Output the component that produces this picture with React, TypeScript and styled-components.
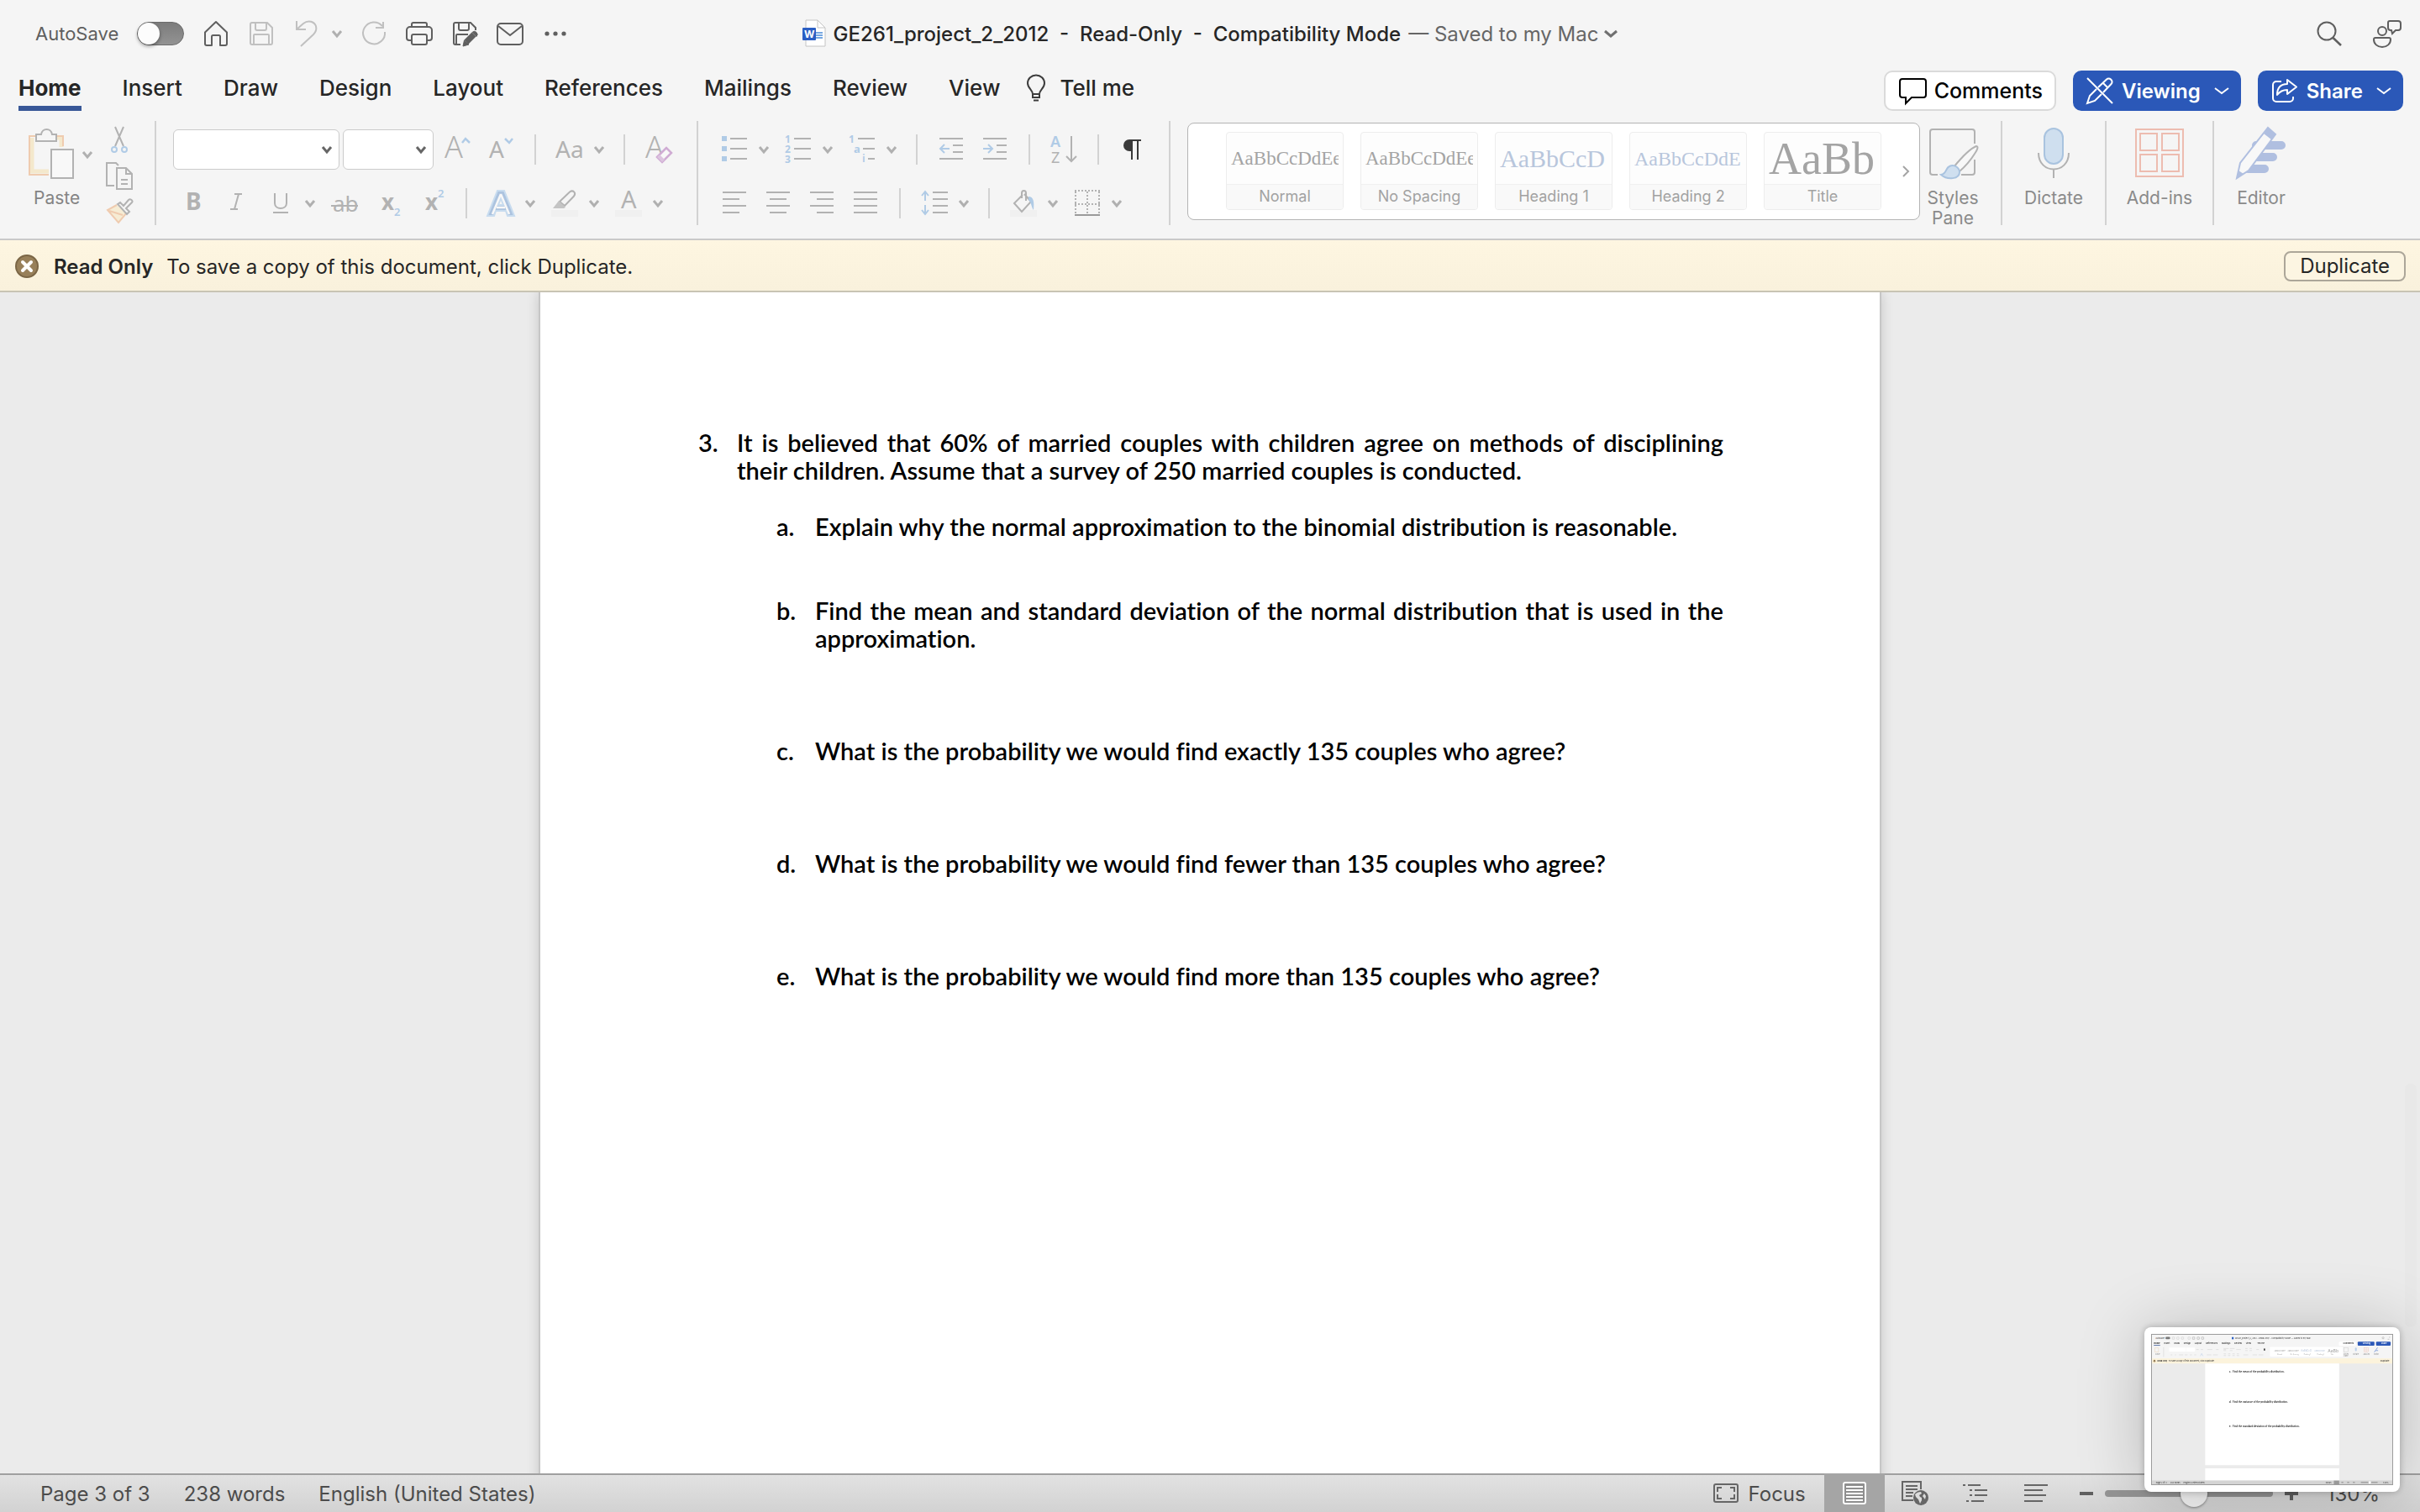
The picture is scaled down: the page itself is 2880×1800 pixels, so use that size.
import React from "react";
import styled, { createGlobalStyle, css } from "styled-components";

const ui = `Inter, "Liberation Sans", sans-serif`;
const serif = `"Liberation Serif", serif`;
const G = "#b2b2b2";
const B = "#b0cbe6";
const D = "#5f5f5f";

const Global = createGlobalStyle`
  * { box-sizing: border-box; }
  body { margin: 0; background: #ebebeb; font-family: ${ui}; color: #262626; }
  button, select, input { font: inherit; color: inherit; margin: 0; }
  button { border: 0; background: none; padding: 0; }
  svg { display: block; flex: none; overflow: visible; }
`;

const Window = styled.div`
  position: relative;
  display: flex;
  flex-direction: column;
  height: 100vh;
  overflow: hidden;
`;

const Chrome = styled.header`
  background: #f5f5f5;
  border-bottom: 2px solid #c9c9c9;
`;

const TitleBar = styled.div`
  display: grid;
  grid-template-columns: 1fr auto 1fr;
  align-items: center;
  height: 82px;
  padding: 0 22px 2px;
`;

const Quick = styled.div`
  display: flex;
  align-items: center;
  gap: 22px;
  padding-left: 20px;
`;

const AutoSave = styled.label`
  display: flex;
  align-items: center;
  gap: 22px;
  font-size: 22px;
  color: ${D};
`;

const Toggle = styled.input`
  appearance: none;
  display: flex;
  width: 56px;
  height: 28px;
  border: 1px solid #6c6c6c;
  border-radius: 14px;
  background: linear-gradient(#7c7c7c, #939393);
  &::before {
    content: "";
    width: 26px;
    height: 26px;
    border-radius: 50%;
    background: #fcfcfc;
    box-shadow: 0 2px 4px rgba(0, 0, 0, 0.4);
  }
`;

const Split = styled.div<{ $gap?: number }>`
  display: flex;
  align-items: center;
  gap: ${(p) => p.$gap ?? 12}px;
`;

const DocTitle = styled.h1`
  display: flex;
  align-items: center;
  gap: 9px;
  margin: 0;
  font-size: 24px;
  font-weight: 500;
  white-space: pre;
  color: #262626;
`;

const Saved = styled.button`
  display: flex;
  align-items: center;
  gap: 7px;
  font-weight: 400;
  color: #666;
`;

const Corner = styled.div`
  display: flex;
  justify-content: flex-end;
  align-items: center;
  gap: 36px;
`;

const TabBar = styled.div`
  display: flex;
  justify-content: space-between;
  height: 52px;
  padding: 0 20px 0 22px;
`;

const Tabs = styled.nav`
  display: flex;
  align-items: flex-start;
  gap: 49px;
`;

const Tab = styled.button<{ $on?: boolean }>`
  display: flex;
  align-items: center;
  gap: 16px;
  height: 50px;
  padding-top: 2px;
  font-size: 26px;
  line-height: 30px;
  font-weight: ${(p) => (p.$on ? 700 : 500)};
  border-bottom: 6px solid transparent;
  ${(p) =>
    p.$on &&
    css`
      border-image: linear-gradient(#385797, #385797) 1;
    `}
`;

const TellMe = styled(Tab)`
  margin-left: -18px;
`;

const Actions = styled.div`
  display: flex;
  gap: 20px;
  padding-top: 2px;
`;

const Action = styled.button<{ $primary?: boolean }>`
  display: flex;
  align-items: center;
  gap: 10px;
  height: 48px;
  padding: ${(p) => (p.$primary ? "0 12px 0 14px" : "0 14px 0 16px")};
  border-radius: 10px;
  border: 2px solid ${(p) => (p.$primary ? "#2b58b8" : "#dadada")};
  background: ${(p) => (p.$primary ? "#2b58b8" : "#fff")};
  color: ${(p) => (p.$primary ? "#fff" : "#000")};
  font-size: ${(p) => (p.$primary ? 24 : 25)}px;
  font-weight: ${(p) => (p.$primary ? 600 : 500)};
  svg:last-child:not(:first-child) {
    margin-left: 6px;
  }
`;

const Ribbon = styled.div`
  display: flex;
  height: 150px;
  padding: 10px 0 16px;
`;

const Divider = styled.div`
  width: 2px;
  flex: none;
  background: #d2d2d2;
`;

const Clipboard = styled.div`
  display: flex;
  width: 184px;
  padding: 6px 26px 0 34px;
  gap: 16px;
`;

const Paste = styled.div`
  display: flex;
  flex-direction: column;
  gap: 8px;
  width: 76px;
  padding-top: 3px;
`;

const PasteLabel = styled.span`
  font-size: 21px;
  line-height: 26px;
  color: #848484;
  padding-left: 6px;
`;

const Stack = styled.div`
  display: flex;
  flex-direction: column;
  gap: 11px;
`;

const Group = styled.div<{ $left: number; $right: number }>`
  display: flex;
  flex-direction: column;
  gap: 22px;
  padding: 10px ${(p) => p.$right}px 0 ${(p) => p.$left}px;
`;

const Row = styled.div<{ $h: number; $indent?: number }>`
  display: flex;
  align-items: center;
  gap: 18px;
  height: ${(p) => p.$h}px;
  padding-left: ${(p) => p.$indent ?? 0}px;
`;

const Tool = styled.button`
  display: flex;
  justify-content: center;
  width: 34px;
`;

const Bar = styled.div`
  width: 2px;
  height: 36px;
  margin: 0 5px;
  background: #d2d2d2;
`;

const Combos = styled.div`
  display: flex;
  gap: 4px;
  margin-right: -7px;
`;

const Combo = styled.label<{ $w: number }>`
  display: grid;
  grid-template-columns: 1fr 20px;
  align-items: center;
  width: ${(p) => p.$w}px;
  height: 48px;
  border: 1px solid #cbcbcb;
  border-radius: 6px;
  background: #fff;
  select {
    appearance: none;
    grid-area: 1 / 1 / 2 / 3;
    height: 46px;
    border: 0;
    background: none;
  }
  svg {
    grid-area: 1 / 2;
  }
`;

const Gallery = styled.div`
  display: flex;
  align-items: center;
  height: 116px;
  margin: 2px 0 0 20px;
  padding-left: 45px;
  border: 1px solid #b4b4b4;
  border-radius: 8px;
  background: #fff;
`;

const Cards = styled.div`
  display: flex;
  gap: 20px;
  padding-bottom: 1px;
`;

const Card = styled.button`
  display: flex;
  flex-direction: column;
  width: 140px;
  height: 93px;
  border: 1px solid #ededed;
  border-radius: 4px;
  overflow: hidden;
  background: #fdfdfd;
`;

const Sample = styled.span<{ $size: number; $color: string }>`
  width: 128px;
  height: 62px;
  margin: 0 5px;
  overflow: hidden;
  text-align: left;
  font-family: ${serif};
  font-size: ${(p) => p.$size}px;
  line-height: 62px;
  color: ${(p) => p.$color};
`;

const CardName = styled.span`
  width: 100%;
  height: 30px;
  border-top: 1px solid #f1f1f1;
  background: #f9f9f9;
  font-size: 18px;
  line-height: 28px;
  color: #a2a2a2;
`;

const More = styled.button`
  display: flex;
  justify-content: flex-end;
  width: 45px;
  padding-right: 12px;
`;

const Big = styled.button<{ $w: number }>`
  display: flex;
  flex-direction: column;
  align-items: center;
  gap: 10px;
  width: ${(p) => p.$w}px;
  padding-top: 6px;
  font-size: 21px;
  line-height: 24px;
  color: #8a8a8a;
`;

const Spacer = styled.div`
  width: 18px;
`;

const Notice = styled.div`
  display: flex;
  align-items: center;
  height: 62px;
  flex: none;
  padding: 2px 17px 0 18px;
  border-bottom: 2px solid #c8c4b4;
  background: linear-gradient(#fef6e1, #f9f1dc);
  font-size: 24px;
  p {
    margin: 0 auto 0 18px;
  }
  strong {
    font-weight: 600;
    margin-right: 16px;
  }
`;

const Duplicate = styled.button`
  height: 36px;
  padding: 0 17px;
  border: 2px solid #aca699;
  border-radius: 8px;
  background: #fcf5e2;
  font-size: 24px;
  line-height: 30px;
`;

const Canvas = styled.main`
  flex: 1;
  min-height: 0;
  overflow: hidden;
  display: flex;
  justify-content: center;
  background: #ebebeb;
`;

const Page = styled.article`
  width: 1598px;
  height: 1700px;
  padding: 162px 186px 0 188px;
  background: #fff;
  border: solid #c6c6c6;
  border-width: 0 2px;
  box-shadow: 0 0 14px rgba(0, 0, 0, 0.16);
  font-family: Lato, "Open Sans", sans-serif;
  font-size: 29px;
  font-weight: 600;
  font-variant-ligatures: none;
  line-height: 33px;
  text-align: justify;
  color: #000;
`;

const Problem = styled.div`
  display: grid;
  grid-template-columns: 46px 1fr;
`;

const Body = styled.p`
  margin: 0;
`;

const Parts = styled.div`
  margin-left: 93px;
`;

const Part = styled(Problem)<{ $top: number }>`
  margin-top: ${(p) => p.$top}px;
`;

const ScrollThumb = styled.div`
  position: absolute;
  right: 4px;
  bottom: 220px;
  width: 14px;
  height: 290px;
  border-radius: 7px;
  background: #e8e8e8;
`;

const Status = styled.footer`
  display: flex;
  flex: none;
  align-items: center;
  height: 46px;
  padding: 0 48px;
  border-top: 2px solid #a0a0a0;
  background: linear-gradient(#e2e2e2, #d2d2d2);
  font-size: 24px;
  color: #4c4c4c;
`;

const Facts = styled.div`
  display: flex;
  gap: 40px;
  margin-right: auto;
`;

const FocusBtn = styled.button`
  display: flex;
  align-items: center;
  gap: 12px;
  margin-right: 22px;
`;

const View = styled.button<{ $on?: boolean }>`
  display: flex;
  justify-content: center;
  align-items: center;
  width: 72px;
  height: ${(p) => (p.$on ? 48 : 44)}px;
  background: ${(p) => (p.$on ? "#a5a5a5" : "none")};
`;

const Zoom = styled.div`
  display: flex;
  align-items: center;
  gap: 14px;
  margin-left: 16px;
`;

const Slider = styled.input`
  appearance: none;
  width: 200px;
  height: 8px;
  border-radius: 4px;
  background: #949494;
  &::-webkit-slider-thumb {
    appearance: none;
    width: 32px;
    height: 32px;
    border-radius: 50%;
    background: #f3f3f3;
    box-shadow: 0 1px 3px rgba(0, 0, 0, 0.4);
  }
`;

const Percent = styled.span`
  margin-left: 20px;
`;

const Preview = styled.div`
  position: fixed;
  right: 24px;
  bottom: 24px;
  padding: 8px;
  border-radius: 8px;
  background: #fff;
  box-shadow: 0 4px 80px rgba(0, 0, 0, 0.22), 0 0 8px rgba(0, 0, 0, 0.25);
  svg {
    border: 1px solid #9c9c9c;
    overflow: hidden;
  }
`;

type IconProps = {
  w?: number;
  h?: number;
  c?: string;
  s?: number;
  children: React.ReactNode;
};
const Icon = ({ w = 32, h = 32, c = G, s = 2, children }: IconProps) => (
  <svg width={w} height={h} viewBox={`0 0 ${w} ${h}`} fill="none" stroke={c} strokeWidth={s} aria-hidden="true">
    {children}
  </svg>
);

const Chevron = ({ c = "#b0b0b0", s = 3, w = 12 }: { c?: string; s?: number; w?: number }) => (
  <Icon w={w} h={10} c={c} s={s}>
    <path d={`M1 2 L${w / 2} 8 L${w - 1} 2`} />
  </Icon>
);

const T = ({ x, y, size, c, w = 400, f = "Noto Sans", children }: any) => (
  <text x={x} y={y} fontSize={size} fill={c} stroke="none" fontWeight={w} fontFamily={`"${f}", sans-serif`}>
    {children}
  </text>
);

const lines = (rows: [number, number, number][]) => rows.map(([x1, x2, y]) => `M${x1} ${y}H${x2}`).join("");

const icons = {
  home: (
    <Icon c={D}>
      <path d="M3 28V14.500L16 2l13 12.500V28a2 2 0 0 1-2 2h-6V19.500a1.500 1.500 0 0 0-1.500-1.500h-7a1.500 1.500 0 0 0-1.500 1.500V30H5a2 2 0 0 1-2-2z" strokeLinejoin="round" />
    </Icon>
  ),
  save: (
    <Icon c="#c0c0c0">
      <path d="M5 3h18l6 6v18a2 2 0 0 1-2 2H5a2 2 0 0 1-2-2V5a2 2 0 0 1 2-2zM9 3v7a2 2 0 0 0 2 2h9a2 2 0 0 0 2-2V3M7 29V18a1 1 0 0 1 1-1h16a1 1 0 0 1 1 1v11" />
    </Icon>
  ),
  undo: (
    <Icon c="#c0c0c0">
      <path d="M4 1v10h11M4 11L12 4c6-5 13-2 15 3 1 4 0 7-3 10L9 31" />
    </Icon>
  ),
  redo: (
    <Icon c="#c0c0c0">
      <path d="M26 7A13 13 0 1 0 29 14M27 2v7h-9" />
    </Icon>
  ),
  print: (
    <Icon c={D}>
      <path d="M7 24H4a3 3 0 0 1-3-3v-9a4 4 0 0 1 4-4h22a4 4 0 0 1 4 4v9a3 3 0 0 1-3 3h-3M7 8V5a2 2 0 0 1 2-2h14a2 2 0 0 1 2 2v3M9 17h14a2 2 0 0 1 2 2v8a2 2 0 0 1-2 2H9a2 2 0 0 1-2-2v-8a2 2 0 0 1 2-2z" />
    </Icon>
  ),
  savePen: (
    <Icon c={D}>
      <path d="M11 29H5a2 2 0 0 1-2-2V5a2 2 0 0 1 2-2h18l6 6v3M9 3v7a2 2 0 0 0 2 2h8a2 2 0 0 0 2-2V3M6 29V18a1 1 0 0 1 1-1h13" />
      <path d="M18 26L27 17" strokeWidth="7" />
      <path d="M14 31l1.500-7 5.500 5zM25 14.500a3.500 3.500 0 0 1 5 5z" fill={D} stroke={D} strokeWidth="1" />
    </Icon>
  ),
  mail: (
    <Icon c={D}>
      <rect x="1" y="4" width="30" height="25" rx="4" />
      <path d="M2 7l14 11L30 7" />
    </Icon>
  ),
  dots: (
    <Icon c={D}>
      <g fill={D} stroke="none">
        <circle cx="6" cy="16" r="2.600" />
        <circle cx="16" cy="16" r="2.600" />
        <circle cx="26" cy="16" r="2.600" />
      </g>
    </Icon>
  ),
  wordDoc: (
    <Icon w={28} h={34} c="#c4c4c4" s={1}>
      <path d="M4 1h14l9 9v22H4z" fill="#fff" />
      <path d="M18 1v9h9" />
      <path d="M16 16h8M16 19h8M16 22h8" stroke="#4a8ad8" strokeWidth="1.500" />
      <rect x="0" y="10" width="16" height="15" rx="1" fill="#2b5fc4" stroke="none" />
      <T x="2" y="22" size="12" c="#fff" w="700" f="Inter">W</T>
    </Icon>
  ),
  search: (
    <Icon c={D} s={2}>
      <circle cx="13" cy="13" r="10.500" />
      <path d="M20.500 21L30 30" strokeWidth="2.500" />
    </Icon>
  ),
  people: (
    <Icon w={34} h={34} c={D}>
      <circle cx="11" cy="14" r="5" />
      <path d="M3 22h16a2 2 0 0 1 2 2c0 5-4 9-10 9S1 29 1 24a2 2 0 0 1 2-2zM20 2h10a3 3 0 0 1 3 3v5a3 3 0 0 1-3 3h-3l-4 4-1-4h-1a3 3 0 0 1-3-3V4a2 2 0 0 1 2-2z" />
    </Icon>
  ),
  bulb: (
    <Icon w={24} h={32} c="#3c3c3c">
      <path d="M8 23c0-5-6-7-6-13a10 9.500 0 0 1 20 0c0 6-6 8-6 13zM8 23v4h8v-4M9 30.500h6" />
    </Icon>
  ),
  comment: (
    <Icon c="#000">
      <path d="M4 2h25a3 3 0 0 1 3 3v16a3 3 0 0 1-3 3H15l-7 7v-7H4a3 3 0 0 1-3-3V5a3 3 0 0 1 3-3z" />
    </Icon>
  ),
  penOff: (
    <Icon c="#fff">
      <path d="M1 1l30 30M14 12L24 2.500a3.500 3.500 0 0 1 5 0l.500.500a3.500 3.500 0 0 1 0 5L20 18M20 7l6 6M12 14L4 22 1 31l9-3 8-8" />
    </Icon>
  ),
  share: (
    <Icon c="#fff">
      <path d="M12 5H6a4 4 0 0 0-4 4v16a4 4 0 0 0 4 4h16a4 4 0 0 0 4-4v-2" />
      <path d="M19 3l11 8.500L19 20v-5C13 15 10 17 7 21c0-8 4-13 12-13z" strokeLinejoin="round" />
    </Icon>
  ),
  paste: (
    <Icon w={56} h={62}>
      <path d="M4 11v40h20M34 11h5v11" stroke="#f4e8cc" strokeWidth="5" />
      <path d="M9 9H1v46h23M34 9h7v12" stroke="#efcbaf" />
      <path d="M9 7h6c1-8 12-8 13 0h5v8H9z" fill="#f5f5f5" />
      <rect x="27" y="25" width="26" height="34" fill="#f8f8f8" />
    </Icon>
  ),
  cut: (
    <Icon>
      <path d="M11 1l10 23M21 1L11 24" />
      <g stroke={B}>
        <circle cx="10" cy="28" r="3" />
        <circle cx="22" cy="28" r="3" />
      </g>
    </Icon>
  ),
  copy: (
    <Icon>
      <path d="M10 28H1V1h11l3 3M13 7h11l7 7v18H13zM24 7v7h7M18 21h8M18 26h8" />
    </Icon>
  ),
  brush: (
    <Icon>
      <path d="M13 8L2 14l13 15 10-12M4 15l16 5" stroke="#efcbaf" fill="#f6ecd4" />
      <path d="M14 7l3-2 4 4 6-7c2-2 6 1 4 3l-7 7 4 4-3 3z" fill="#f5f5f5" />
    </Icon>
  ),
  grow: (
    <Icon>
      <T x="1" y="26" size="36" c={G} w="300">A</T>
      <path d="M22 8l4-5 5 5" stroke={B} strokeWidth="2.500" />
    </Icon>
  ),
  shrink: (
    <Icon>
      <T x="2" y="26" size="28" c={G}>A</T>
      <path d="M21 3l5 5 4-5" stroke={B} strokeWidth="2.500" />
    </Icon>
  ),
  changeCase: (
    <Icon>
      <T x="-1" y="26" size="28" c={G}>Aa</T>
    </Icon>
  ),
  clear: (
    <Icon>
      <T x="0" y="26" size="36" c={G} w="300">A</T>
      <path d="M14 25L25 14l6 6-11 11z" fill="#f8f8f8" stroke="#d0acd4" strokeWidth="2.500" />
      <path d="M14 25l3-3 6 6-3 3z" fill="#dcc4df" stroke="none" />
    </Icon>
  ),
  bold: <Icon><T x="7" y="24" size="28" c={G} w="700">B</T></Icon>,
  italic: (
    <Icon><path d="M13 5h9M8 23h9M18 5l-5 18" /></Icon>
  ),
  underline: (
    <Icon>
      <path d="M9 4v12c0 8 14 8 14 0V4M7 27h18" />
    </Icon>
  ),
  strike: (
    <Icon>
      <T x="2" y="26" size="26" c={G}>ab</T>
      <path d="M0 19h32" />
    </Icon>
  ),
  sub: (
    <Icon>
      <T x="8" y="24" size="26" c={G} w="700">x</T>
      <T x="23" y="31" size="13" c={B} w="600">2</T>
    </Icon>
  ),
  sup: (
    <Icon>
      <T x="8" y="24" size="26" c={G} w="700">x</T>
      <T x="23" y="9" size="13" c={B} w="600">2</T>
    </Icon>
  ),
  effects: (
    <Icon>
      <path d="M12 1h8l12 30h-8l-2-6H10l-2 6H0zM13 18h6l-3-8z" fill="#acc3df" stroke="#c8dcef" />
      <path d="M16 5L6 29M16 5l10 24M11 21h10" stroke="#f8f8f8" strokeWidth="2.500" />
    </Icon>
  ),
  marker: (
    <Icon>
      <path d="M10 14L22 2.500c4-3 8 1 5 5L16 19z" />
      <path d="M9 13l8 8-2 1H2z" fill="#c4c4c4" stroke="none" />
      <path d="M0 28h32" stroke="#f0f0f0" strokeWidth="8" />
    </Icon>
  ),
  fontColor: (
    <Icon>
      <path d="M0 28h32" stroke="#f0f0f0" strokeWidth="8" />
      <T x="7" y="22" size="29" c={G}>A</T>
    </Icon>
  ),
  bullets: (
    <Icon>
      <path d={lines([[11, 31, 3], [11, 31, 15], [11, 31, 27]])} />
      <path d="M1 0h6v6H1zM1 12h6v6H1zM1 24h6v6H1z" fill={B} stroke="none" />
    </Icon>
  ),
  numbers: (
    <Icon>
      <path d={lines([[11, 31, 3], [11, 31, 15], [11, 31, 27]])} />
      <T x="0" y="8" size="12" c={B} w="700">1</T>
      <T x="0" y="20" size="12" c={B} w="700">2</T>
      <T x="0" y="32" size="12" c={B} w="700">3</T>
    </Icon>
  ),
  multi: (
    <Icon>
      <path d={lines([[11, 31, 3], [17, 31, 15], [23, 31, 27]])} />
      <T x="0" y="8" size="12" c={B} w="700">1</T>
      <T x="6" y="20" size="13" c={B} w="700">a</T>
      <T x="16" y="31" size="13" c={B} w="600">i</T>
    </Icon>
  ),
  outdent: (
    <Icon>
      <path d={lines([[2, 30, 3], [18, 30, 11], [18, 30, 19], [2, 30, 27]])} />
      <path d="M14 15H3M8 10l-5 5 5 5" stroke={B} />
    </Icon>
  ),
  indent: (
    <Icon>
      <path d={lines([[2, 30, 3], [18, 30, 11], [18, 30, 19], [2, 30, 27]])} />
      <path d="M2 15h11M8 10l5 5-5 5" stroke={B} />
    </Icon>
  ),
  sort: (
    <Icon>
      <T x="0" y="13" size="18" c={B} w="600">A</T>
      <T x="1" y="32" size="18" c={G}>Z</T>
      <path d="M25 0v30M19 24l6 6 6-6" />
    </Icon>
  ),
  pilcrow: (
    <Icon c="#3a3a3a">
      <path d="M26 5H13v0" />
      <path d="M15 4h-3a7 7 0 0 0 0 14h3z" fill="#3a3a3a" stroke="none" />
      <path d="M15 4v24M22 4v24" />
    </Icon>
  ),
  left: <Icon><path d={lines([[2, 30, 3], [2, 22, 11], [2, 30, 19], [2, 22, 27]])} /></Icon>,
  center: <Icon><path d={lines([[2, 30, 3], [6, 26, 11], [2, 30, 19], [6, 26, 27]])} /></Icon>,
  right: <Icon><path d={lines([[2, 30, 3], [10, 30, 11], [2, 30, 19], [10, 30, 27]])} /></Icon>,
  justify: <Icon><path d={lines([[2, 30, 3], [2, 30, 11], [2, 30, 19], [2, 30, 27]])} /></Icon>,
  spacing: (
    <Icon>
      <path d={lines([[14, 32, 3], [14, 32, 11], [14, 32, 19], [14, 32, 27]])} />
      <path d="M5 13V3M1 7l4-5 4 5M5 18v10M1 24l4 5 4-5" stroke={B} />
    </Icon>
  ),
  bucket: (
    <Icon>
      <path d="M0 28h32" stroke="#f0f0f0" strokeWidth="8" />
      <path d="M15 6L5 16l9 10 11-12-8-9M14 10V4c0-4 5-4 5 0v9" />
      <path d="M22 8c6 0 7 6 6 16-3-4-2-8-6-12z" fill={B} stroke="none" />
    </Icon>
  ),
  borders: (
    <Icon>
      <path d="M1 1h30M1 17h30" strokeDasharray="2 2" />
      <path d="M2 2v26M16 2v26M30 2v26" strokeDasharray="2 2" />
      <path d="M1 30h30" stroke="#9a9a9a" />
    </Icon>
  ),
  styles: (
    <Icon w={60} h={64}>
      <path d="M12 58H6a3 3 0 0 1-3-3V7a3 3 0 0 1 3-3h47a3 3 0 0 1 3 3v14M56 40v15a3 3 0 0 1-3 3H40" />
      <path d="M31 49C40 38 50 27 58 24c3 0 1 5-2 9-5 8-11 15-18 21" fill="#f8f8f8" />
      <path d="M16 58c7-1 5-8 10-10 6-3 12 2 12 7 0 8-14 10-22 3z" fill="#cfdfef" stroke="#a9c3df" />
    </Icon>
  ),
  mic: (
    <Icon w={60} h={64}>
      <rect x="19" y="3" width="22" height="42" rx="11" fill="#cfdfef" stroke="#a9c3df" />
      <path d="M12 32c0 26 36 26 36 0M30 51v11" />
    </Icon>
  ),
  addins: (
    <Icon w={60} h={64} c="#edbcb0">
      <rect x="2" y="4" width="56" height="56" />
      <path d="M7 9h20v20H7zM33 9h20v20H33zM7 34h20v20H7zM33 34h20v20H33z" />
    </Icon>
  ),
  editor: (
    <Icon w={60} h={64} c="#b0bfe0" s={10}>
      <path d="M24 23H54M20 37H44M14 51H34" strokeLinecap="round" />
      <path d="M1 62L5 44 38 2l9 8L15 53z" fill="#f8f8f8" strokeWidth="2" />
      <path d="M38 2l9 8-5 6-9-7zM1 62l2-9 6 4z" fill="#b0bfe0" stroke="none" />
    </Icon>
  ),
  close: (
    <Icon w={28} h={28} c="#fff" s={4}>
      <circle cx="14" cy="14" r="13" fill="#98805a" stroke="#7b6646" strokeWidth="2" />
      <path d="M9 9l10 10M19 9L9 19" strokeLinecap="round" />
    </Icon>
  ),
  focus: (
    <Icon w={30} h={24} c="#666">
      <rect x="1" y="1" width="28" height="21" rx="2" />
      <path d="M5 10V5h5M20 5h5v5M5 13v5h5M20 18h5v-5" />
    </Icon>
  ),
  printView: (
    <Icon w={28} h={28} c="#fff">
      <rect x="1" y="1" width="26" height="25" rx="2" fill="#8f8f8f" />
      <path d="M4 6h20M4 10h20M4 14h20M4 18h20M4 22h20" />
    </Icon>
  ),
  web: (
    <Icon c="#666">
      <path d="M14 24H1V2h22v9M5 7h14M5 11h14M5 15h9M5 19h8" />
      <circle cx="23" cy="21" r="9" fill="#666" stroke="none" />
      <path d="M16 17c2-2 4-3 7-3l1 2-3 2 1 2 2 1v3l-2 4-2-5-3-3zM27 16l2 3-1 4-3-4z" fill="#dcdcdc" stroke="none" />
    </Icon>
  ),
  outline: (
    <Icon c="#666">
      <path d={lines([[1, 4, 6], [7, 22, 6], [9, 12, 12], [15, 30, 12], [9, 12, 18], [15, 30, 18], [5, 8, 25], [11, 26, 25]])} />
    </Icon>
  ),
  draft: (
    <Icon c="#666">
      <path d={lines([[2, 30, 6], [2, 24, 12], [2, 28, 18], [2, 24, 25]])} />
    </Icon>
  ),
  minus: <Icon w={16} h={16} c="#606060" s={4}><path d="M0 8h16" /></Icon>,
  plus: <Icon w={16} h={16} c="#606060" s={4}><path d="M0 8h16M8 0v16" /></Icon>,
};

type Name = keyof typeof icons;

const ToolButton = ({ name, label }: { name: Name; label: string }) => (
  <Tool type="button" aria-label={label}>{icons[name]}</Tool>
);

const SplitTool = ({ name, label }: { name: Name; label: string }) => (
  <Split>
    <ToolButton name={name} label={label} />
    <button type="button" aria-label={`${label} options`}><Chevron /></button>
  </Split>
);

const styleCards = [
  { name: "Normal", sample: "AaBbCcDdEe", size: 23, color: "#a4a4a4" },
  { name: "No Spacing", sample: "AaBbCcDdEe", size: 23, color: "#a4a4a4" },
  { name: "Heading 1", sample: "AaBbCcD", size: 30, color: "#b8c6dc" },
  { name: "Heading 2", sample: "AaBbCcDdE", size: 24, color: "#b8c6dc" },
  { name: "Title", sample: "AaBb", size: 54, color: "#a4a4a4" },
];

const parts = [
  { mark: "a.", top: 34, text: "Explain why the normal approximation to the binomial distribution is reasonable." },
  { mark: "b.", top: 67, text: "Find the mean and standard deviation of the normal distribution that is used in the approximation." },
  { mark: "c.", top: 101, text: "What is the probability we would find exactly 135 couples who agree?" },
  { mark: "d.", top: 101, text: "What is the probability we would find fewer than 135 couples who agree?" },
  { mark: "e.", top: 101, text: "What is the probability we would find more than 135 couples who agree?" },
];

const tabNames = ["Insert", "Draw", "Design", "Layout", "References", "Mailings", "Review", "View"];

const MiniWindow = () => {
  const t = (x: number, y: number, size: number, s: string, fill = "#333", weight = 400) => (
    <text key={`${x}-${y}`} x={x} y={y} fontSize={size} fill={fill} fontWeight={weight} fontFamily="Inter, sans-serif">{s}</text>
  );
  const xs = [145, 267, 379, 512, 646, 836, 988, 1125];
  return (
    <svg width="288" height="180" viewBox="0 0 2880 1800" preserveAspectRatio="none" role="img" aria-label="Screenshot preview">
      <rect width="2880" height="1800" fill="#ebebeb" />
      <rect width="2880" height="284" fill="#f5f5f5" />
      <rect y="284" width="2880" height="62" fill="#fcf3dc" />
      <rect x="638" y="346" width="1606" height="1224" fill="#fff" />
      <rect x="638" y="1607" width="1606" height="150" fill="#fff" />
      <rect y="1754" width="2880" height="46" fill="#d4d4d4" />
      {t(42, 48, 24, "AutoSave")}
      <rect x="162" y="26" width="56" height="28" rx="14" fill="#777" />
      <g fill="none" stroke="#888" strokeWidth="4">
        {[244, 298, 353, 432].map((x) => <rect key={x} x={x} y="28" width="26" height="26" rx="6" opacity="0.5" />)}
        {[486, 542, 594].map((x) => <rect key={x} x={x} y="28" width="26" height="26" rx="4" />)}
        <circle cx="2770" cy="38" r="11" />
        <path d="M2825 54h20M2840 30h14" />
      </g>
      <rect x="957" y="28" width="22" height="26" fill="#2b5fc4" />
      {t(994, 50, 25, "GE261_project_2_2012 - Read-Only - Compatibility Mode — Saved to my Mac")}
      {t(22, 114, 26, "Home", "#222", 700)}
      <rect x="22" y="124" width="76" height="8" fill="#385797" />
      {tabNames.map((n, i) => t(xs[i], 114, 26, n, "#222", 500))}
      {t(1262, 114, 26, "Tell me", "#222", 500)}
      <rect x="2240" y="84" width="206" height="48" rx="12" fill="#fff" />
      {t(2290, 116, 25, "Comments", "#111", 500)}
      <rect x="2466" y="84" width="200" height="48" rx="10" fill="#2b58b8" />
      <rect x="2686" y="84" width="174" height="48" rx="10" fill="#2b58b8" />
      {t(2526, 116, 24, "Viewing", "#fff", 600)}
      {t(2746, 116, 24, "Share", "#fff", 600)}
      <rect x="206" y="154" width="198" height="48" fill="#fff" />
      <rect x="408" y="154" width="108" height="48" fill="#fff" />
      <rect x="1414" y="146" width="872" height="116" rx="8" fill="#fff" />
      <g fill="none" stroke="#c4c4c4" strokeWidth="4">
        <rect x="36" y="160" width="44" height="48" stroke="#e4c8a8" />
        <path d="M140 150v116M530 178h30M585 178h28M663 178h60M768 178h30M223 242h20M275 242h14M324 242h50M394 242h32M455 242h22M507 242h22M656 242h56M732 242h56" />
        <path d="M858 166h62M858 178h30M858 190h30M934 166h56M934 190h30M1010 178h56M1118 166h28M1118 190h28M1170 166h28M1170 190h28M1250 178h32M860 230h28M860 250h28M912 230h28M912 250h28M964 230h28M964 250h28M1016 230h28M1016 250h28M1096 242h56M1207 242h52M1278 242h56" />
        <path d="M580 256l16-30 16 30" stroke="#a0bde0" />
        <rect x="2298" y="156" width="56" height="54" />
        <rect x="2540" y="156" width="56" height="54" stroke="#edbcb0" />
        <path d="M2568 156v54M2540 183h56" stroke="#edbcb0" />
        <path d="M2664 210l40-56M2680 190h30" stroke="#8fa9de" strokeWidth="10" />
      </g>
      <rect x="2434" y="154" width="20" height="42" rx="10" fill="#b9d0ea" />
      <rect x="1340" y="166" width="16" height="24" fill="#333" />
      {styleCards.map((c, i) => (
        <React.Fragment key={c.name}>
          {t(1466 + i * 160, i === 4 ? 216 : 200, c.size - 2, c.sample, c.color)}
          {t(1500 + i * 160, 242, 18, c.name, "#a2a2a2")}
        </React.Fragment>
      ))}
      {t(41, 242, 21, "Paste", "#888")}
      {t(2296, 242, 21, "Styles", "#888")}
      {t(2300, 266, 21, "Pane", "#888")}
      {t(2409, 242, 21, "Dictate", "#888")}
      {t(2532, 242, 21, "Add-ins", "#888")}
      {t(2662, 242, 21, "Editor", "#888")}
      <circle cx="30" cy="315" r="13" fill="#98805a" />
      {t(65, 324, 24, "Read Only", "#222", 600)}
      {t(200, 324, 24, "To save a copy of this document, click Duplicate.", "#222")}
      {t(2737, 324, 24, "Duplicate", "#222")}
      {t(924, 460, 29, "c.", "#111", 600)}
      {t(968, 460, 29, "Find the mean of the probability distribution.", "#111", 600)}
      {t(924, 820, 29, "d.", "#111", 600)}
      {t(968, 820, 29, "Find the variance of the probability distribution.", "#111", 600)}
      {t(924, 1112, 29, "e.", "#111", 600)}
      {t(968, 1112, 29, "Find the standard deviation of the probability distribution.", "#111", 600)}
      {t(48, 1786, 24, "Page 2 of 3")}
      {t(218, 1786, 24, "238 words")}
      {t(378, 1786, 24, "English (United States)")}
      {t(2082, 1786, 24, "Focus")}
      <rect x="2180" y="1756" width="64" height="44" fill="#999" />
      <path d="M2270 1778h24M2340 1778h24M2408 1778h24M2504 1778h200" stroke="#777" strokeWidth="8" />
      <circle cx="2610" cy="1778" r="16" fill="#fff" />
      {t(2773, 1786, 24, "130%")}
    </svg>
  );
};

export default function App() {
  return (
    <Window>
      <Global />
      <Chrome>
        <TitleBar>
          <Quick>
            <AutoSave>
              AutoSave
              <Toggle type="checkbox" />
            </AutoSave>
            <button type="button" aria-label="Home screen">{icons.home}</button>
            <button type="button" aria-label="Save">{icons.save}</button>
            <Split $gap={14}>
              <button type="button" aria-label="Undo">{icons.undo}</button>
              <button type="button" aria-label="Undo history"><Chevron /></button>
            </Split>
            <button type="button" aria-label="Redo">{icons.redo}</button>
            <button type="button" aria-label="Print">{icons.print}</button>
            <button type="button" aria-label="Save as">{icons.savePen}</button>
            <button type="button" aria-label="Mail">{icons.mail}</button>
            <button type="button" aria-label="More">{icons.dots}</button>
          </Quick>
          <DocTitle>
            {icons.wordDoc}
            <span>GE261_project_2_2012  -  Read-Only  -  Compatibility Mode</span>
            <Saved type="button">— Saved to my Mac<Chevron c="#707070" w={16} /></Saved>
          </DocTitle>
          <Corner>
            <button type="button" aria-label="Search">{icons.search}</button>
            <button type="button" aria-label="Collaborators">{icons.people}</button>
          </Corner>
        </TitleBar>
        <TabBar>
          <Tabs>
            <Tab type="button" $on>Home</Tab>
            {tabNames.map((n) => <Tab type="button" key={n}>{n}</Tab>)}
            <TellMe type="button">{icons.bulb}Tell me</TellMe>
          </Tabs>
          <Actions>
            <Action type="button">{icons.comment}Comments</Action>
            <Action type="button" $primary>{icons.penOff}Viewing<Chevron c="#fff" s={2} w={18} /></Action>
            <Action type="button" $primary>{icons.share}Share<Chevron c="#fff" s={2} w={18} /></Action>
          </Actions>
        </TabBar>
        <Ribbon>
          <Clipboard>
            <Paste>
              <Split $gap={8}>
                <button type="button" aria-label="Paste">{icons.paste}</button>
                <button type="button" aria-label="Paste options"><Chevron /></button>
              </Split>
              <PasteLabel>Paste</PasteLabel>
            </Paste>
            <Stack>
              <button type="button" aria-label="Cut">{icons.cut}</button>
              <button type="button" aria-label="Copy">{icons.copy}</button>
              <button type="button" aria-label="Format painter">{icons.brush}</button>
            </Stack>
          </Clipboard>
          <Divider />
          <Group $left={20} $right={28}>
            <Row $h={48}>
              <Combos>
                <Combo $w={198}><select aria-label="Font" /><Chevron c="#666" /></Combo>
                <Combo $w={108}><select aria-label="Font size" /><Chevron c="#666" /></Combo>
              </Combos>
              <ToolButton name="grow" label="Grow font" />
              <ToolButton name="shrink" label="Shrink font" />
              <Bar />
              <SplitTool name="changeCase" label="Change case" />
              <Bar />
              <ToolButton name="clear" label="Clear formatting" />
            </Row>
            <Row $h={36} $indent={7}>
              <ToolButton name="bold" label="Bold" />
              <ToolButton name="italic" label="Italic" />
              <SplitTool name="underline" label="Underline" />
              <ToolButton name="strike" label="Strikethrough" />
              <ToolButton name="sub" label="Subscript" />
              <ToolButton name="sup" label="Superscript" />
              <Bar />
              <SplitTool name="effects" label="Text effects" />
              <SplitTool name="marker" label="Highlight" />
              <SplitTool name="fontColor" label="Font color" />
            </Row>
          </Group>
          <Divider />
          <Group $left={26} $right={26}>
            <Row $h={48}>
              <SplitTool name="bullets" label="Bullets" />
              <SplitTool name="numbers" label="Numbering" />
              <SplitTool name="multi" label="Multilevel list" />
              <Bar />
              <ToolButton name="outdent" label="Decrease indent" />
              <ToolButton name="indent" label="Increase indent" />
              <Bar />
              <ToolButton name="sort" label="Sort" />
              <Bar />
              <ToolButton name="pilcrow" label="Show marks" />
            </Row>
            <Row $h={36}>
              <ToolButton name="left" label="Align left" />
              <ToolButton name="center" label="Center" />
              <ToolButton name="right" label="Align right" />
              <ToolButton name="justify" label="Justify" />
              <Bar />
              <SplitTool name="spacing" label="Line spacing" />
              <Bar />
              <SplitTool name="bucket" label="Shading" />
              <SplitTool name="borders" label="Borders" />
            </Row>
          </Group>
          <Divider />
          <Gallery>
            <Cards>
              {styleCards.map((c) => (
                <Card type="button" key={c.name}>
                  <Sample $size={c.size} $color={c.color}>{c.sample}</Sample>
                  <CardName>{c.name}</CardName>
                </Card>
              ))}
            </Cards>
            <More type="button" aria-label="More styles">
              <Icon w={8} h={14} c="#a4a4a4"><path d="M1 1l6 6-6 6" /></Icon>
            </More>
          </Gallery>
          <Big type="button" $w={78}>{icons.styles}<span>Styles<br />Pane</span></Big>
          <Spacer />
          <Divider />
          <Big type="button" $w={122}>{icons.mic}Dictate</Big>
          <Divider />
          <Big type="button" $w={126}>{icons.addins}Add-ins</Big>
          <Divider />
          <Big type="button" $w={112}>{icons.editor}Editor</Big>
        </Ribbon>
      </Chrome>
      <Notice>
        <button type="button" aria-label="Dismiss">{icons.close}</button>
        <p><strong>Read Only</strong>To save a copy of this document, click Duplicate.</p>
        <Duplicate type="button">Duplicate</Duplicate>
      </Notice>
      <Canvas>
        <Page>
          <Problem>
            <span>3.</span>
            <Body>
              It is believed that 60% of married couples with children agree on methods of disciplining their children. Assume that a survey of 250 married couples is conducted.
            </Body>
          </Problem>
          <Parts>
            {parts.map((p) => (
              <Part key={p.mark} $top={p.top}>
                <span>{p.mark}</span>
                <Body>{p.text}</Body>
              </Part>
            ))}
          </Parts>
        </Page>
      </Canvas>
      <ScrollThumb />
      <Status>
        <Facts>
          <span>Page 3 of 3</span>
          <span>238 words</span>
          <span>English (United States)</span>
        </Facts>
        <FocusBtn type="button">{icons.focus}Focus</FocusBtn>
        <View type="button" $on aria-label="Print layout">{icons.printView}</View>
        <View type="button" aria-label="Web layout">{icons.web}</View>
        <View type="button" aria-label="Outline">{icons.outline}</View>
        <View type="button" aria-label="Draft">{icons.draft}</View>
        <Zoom>
          <button type="button" aria-label="Zoom out">{icons.minus}</button>
          <Slider type="range" aria-label="Zoom" defaultValue={54} />
          <button type="button" aria-label="Zoom in">{icons.plus}</button>
          <Percent>130%</Percent>
        </Zoom>
      </Status>
      <Preview><MiniWindow /></Preview>
    </Window>
  );
}
